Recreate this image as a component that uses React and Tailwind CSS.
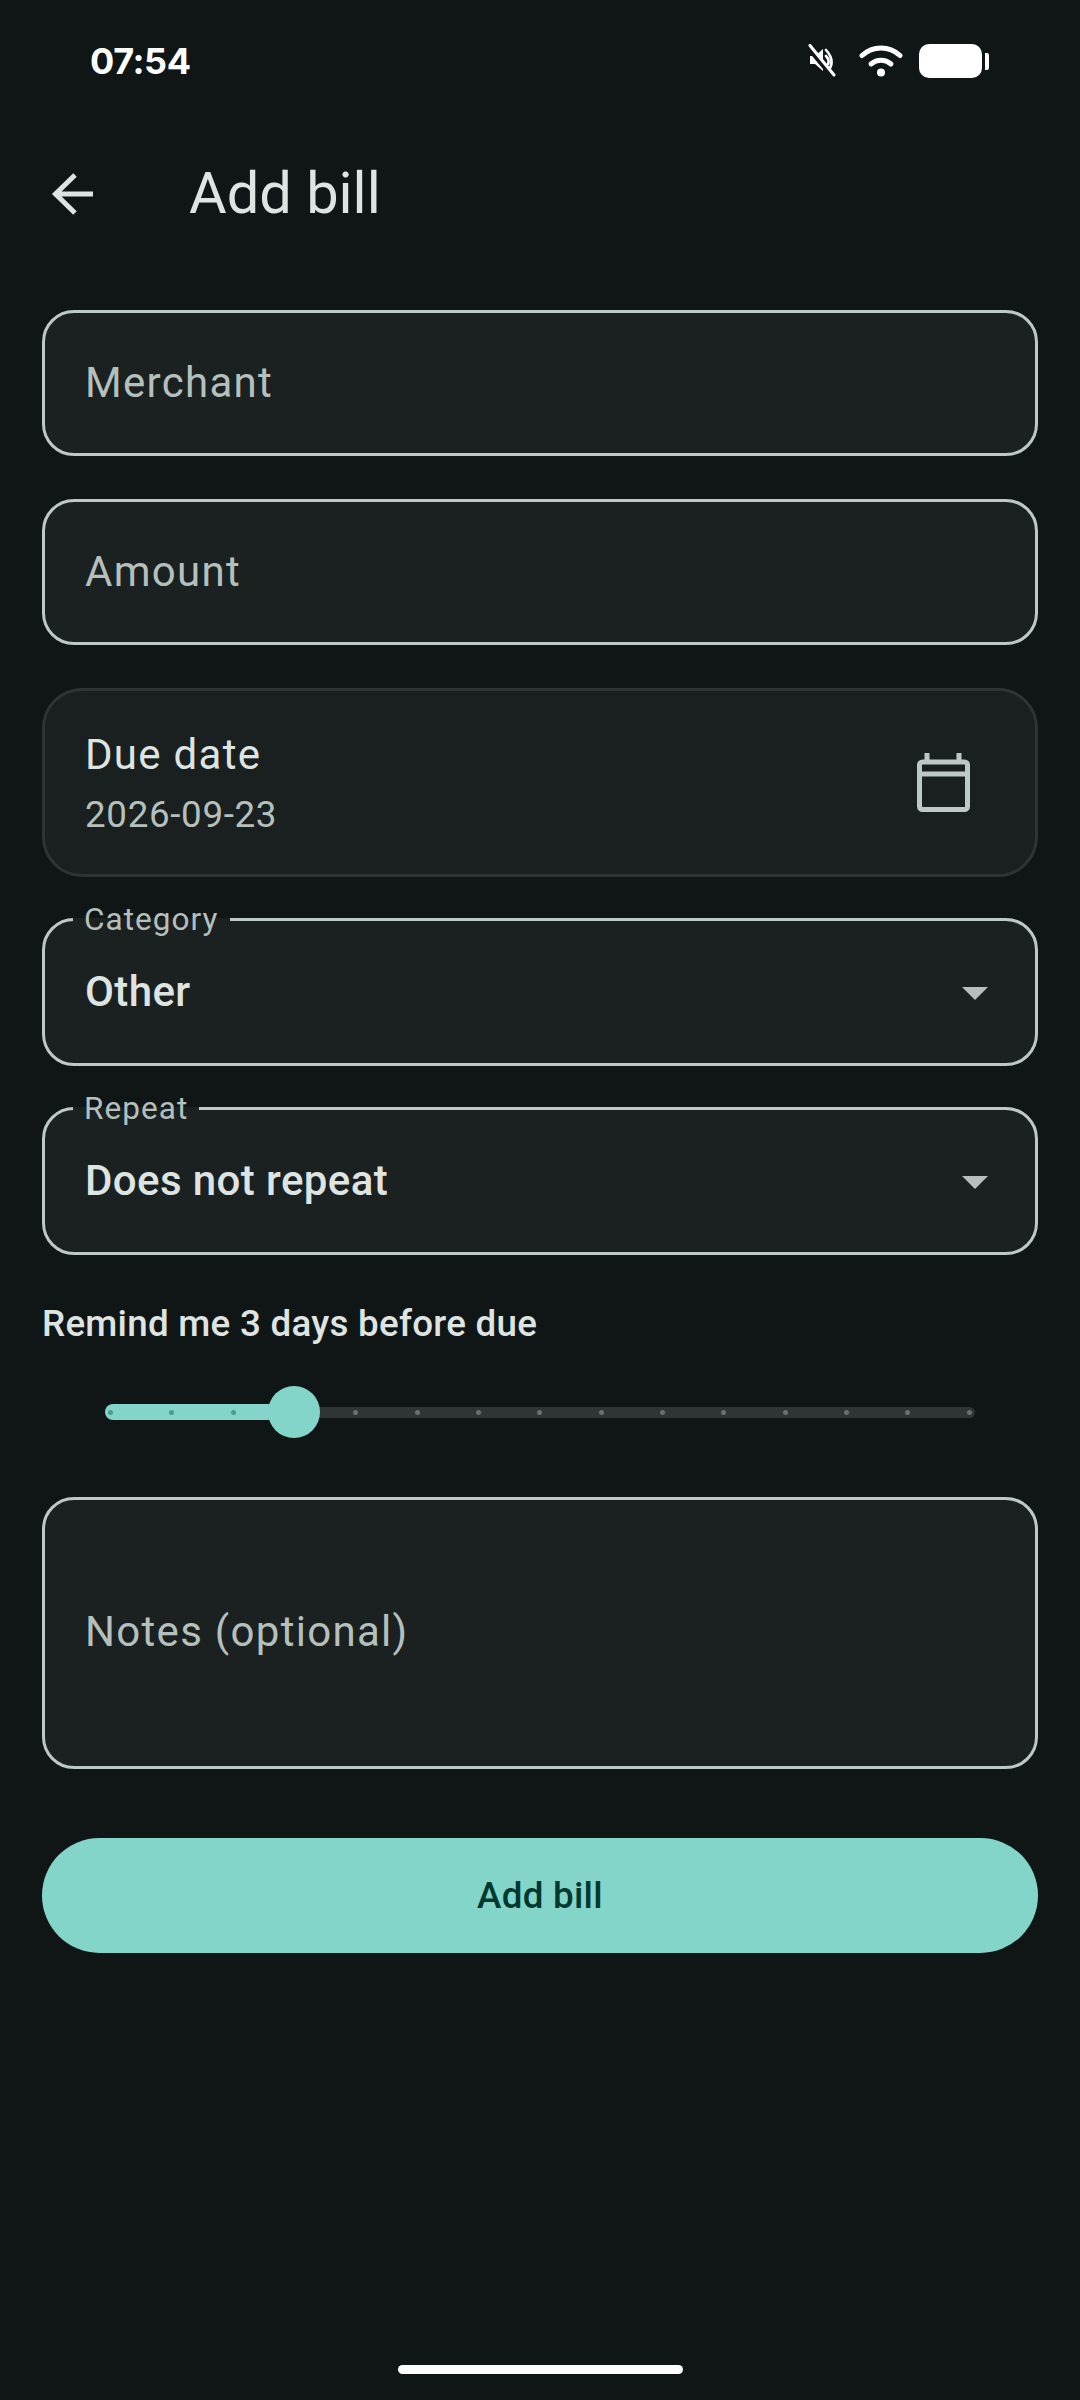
import React from 'react';

const roboto = { fontFamily: 'Roboto, sans-serif' };

function StatusBar() {
  return (
    <div className="flex h-[122px] items-center justify-between pl-[90px] pr-[91px]">
      <span className="font-['Inter',sans-serif] text-[36px] font-bold leading-none tracking-[-0.4px] text-white">07:54</span>
      <div className="flex items-center">
        <svg width="28" height="34" viewBox="0 0 28 34" className="mr-[23px]">
          <path d="M2 12h5l8-7v22l-8-7H2z" fill="#fff" />
          <path d="M18 6Q28 17 20 27M18 12Q22 16 20 20" fill="none" stroke="#fff" strokeWidth="2.600" strokeLinecap="round" />
          <path d="M0 4L25 34" stroke="#101616" strokeWidth="4" />
          <path d="M2 1.500L26 31" stroke="#fff" strokeWidth="3" strokeLinecap="round" />
        </svg>
        <svg width="44" height="34" viewBox="0 0 44 34" className="mr-[16px]">
          <path d="M3 11.500C14 1.500 30 1.500 41 11.500" fill="none" stroke="#fff" strokeWidth="5" strokeLinecap="round" />
          <path d="M12 20C18 15 26 15 32 20" fill="none" stroke="#fff" strokeWidth="5" strokeLinecap="round" />
          <circle cx="22" cy="28.500" r="4" fill="#fff" />
        </svg>
        <div className="h-[34px] w-[63px] rounded-[10px] bg-white" />
        <div className="ml-[3px] h-[17px] w-[4px] rounded-r-[2px] bg-white" />
      </div>
    </div>
  );
}

function TextField({ label, className = 'h-[146px]' }) {
  return (
    <div className={`flex items-center rounded-[32px] border-[3px] border-[#bec9c6] bg-[#1b2121] px-[40px] ${className}`}>
      <span className="text-[42px] leading-none tracking-[1.3px] text-[#b5c0bd]">{label}</span>
    </div>
  );
}

function SelectField({ label, value }) {
  return (
    <fieldset className="h-[162px] rounded-[32px] border-[3px] border-[#bec9c6] bg-[#1b2121] pr-[47px]">
      <legend className="ml-[28px] px-[11px] text-[31.500px] leading-[31px] tracking-[1.050px] text-[#b5c0bd]">{label}</legend>
      <div className="flex h-[113px] items-center justify-between">
        <span className="pl-[40px] text-[42px] font-medium leading-none tracking-[0.4px] text-[#dee4e2]">{value}</span>
        <svg width="26" height="13" viewBox="0 0 26 13" className="mt-[4px]"><path d="M0 0h26L13 13z" fill="#b9bdbc" /></svg>
      </div>
    </fieldset>
  );
}

function Slider() {
  const dots = Array.from({ length: 15 }, (_, i) => i);
  return (
    <div className="relative mt-[40px] ml-[63px] h-[52px] w-[870px]">
      <div className="absolute left-0 right-0 top-[20.5px] flex h-[11px] items-center justify-between rounded-full bg-[#2f3535] px-[3px]">
        {dots.map((i) => (
          <span key={i} className={`h-[5px] w-[5px] rounded-full ${i < 3 ? 'bg-transparent' : 'bg-[#6a7070]'}`} />
        ))}
      </div>
      <div className="absolute left-0 top-[18px] flex h-[16px] w-[180px] items-center rounded-full bg-[#82d5c8] pl-[3px]">
        <span className="h-[5px] w-[5px] rounded-full bg-[#4f9a90]" />
        <span className="ml-[56.360px] h-[5px] w-[5px] rounded-full bg-[#4f9a90]" />
        <span className="ml-[56.360px] h-[5px] w-[5px] rounded-full bg-[#4f9a90]" />
      </div>
      <div className="absolute left-[163px] top-0 h-[52px] w-[52px] rounded-full bg-[#82d5c8]" />
    </div>
  );
}

export default function App() {
  return (
    <div style={roboto} className="flex h-[2400px] w-[1080px] flex-col bg-[#101616]">
      <StatusBar />

      <div className="flex h-[144px] items-center pl-[50px]">
        <svg width="48" height="48" viewBox="0 0 48 48">
          <path d="M43 24H7M25 5L5.500 24 25 43" fill="none" stroke="#dee4e2" strokeWidth="5" />
        </svg>
        <h1 className="ml-[91px] text-[57.750px] font-normal leading-none text-[#dee4e2]">Add bill</h1>
      </div>

      <div className="flex flex-col px-[42px] pt-[44px]">
        <TextField label="Merchant" />
        <div className="mt-[43px]"><TextField label="Amount" /></div>

        <div className="mt-[43px] flex h-[189px] items-center justify-between rounded-[40px] border-[3px] border-[#2e3434] bg-[#1a2020] pl-[40px] pr-[65px]">
          <div>
            <div className="mt-[1px] text-[42px] leading-[52px] tracking-[1.3px] text-[#dee4e2]">Due date</div>
            <div className="mt-[12px] text-[36.750px] leading-[44px] tracking-[0.660px] text-[#b5c0bd]">2026-09-23</div>
          </div>
          <svg width="53" height="59" viewBox="0 0 53 59">
            <path d="M5.500 9h42a3 3 0 0 1 3 3v41.500a3 3 0 0 1-3 3h-42a3 3 0 0 1-3-3V12a3 3 0 0 1 3-3zM2.500 21h48" fill="none" stroke="#bec9c6" strokeWidth="5" />
            <path d="M10 0v9M42 0v9" fill="none" stroke="#bec9c6" strokeWidth="5" />
          </svg>
        </div>

        <div className="mt-[27px]"><SelectField label="Category" value="Other" /></div>
        <div className="mt-[27px]"><SelectField label="Repeat" value="Does not repeat" /></div>

        <div className="mt-[47px] text-[36.750px] font-medium leading-[44px] tracking-[0.260px] text-[#dee4e2]">Remind me 3 days before due</div>
        <Slider />

        <div className="mt-[59px]"><TextField label="Notes (optional)" className="h-[272px] pb-[2px]" /></div>

        <button className="mt-[69px] flex h-[115px] items-center justify-center rounded-full bg-[#82d5c8] text-[36.750px] font-medium tracking-[0.260px] text-[#00382f]">
          Add bill
        </button>
      </div>

      <div className="mt-auto mb-[26px] h-[9px] w-[285px] self-center rounded-full bg-white" />
    </div>
  );
}
